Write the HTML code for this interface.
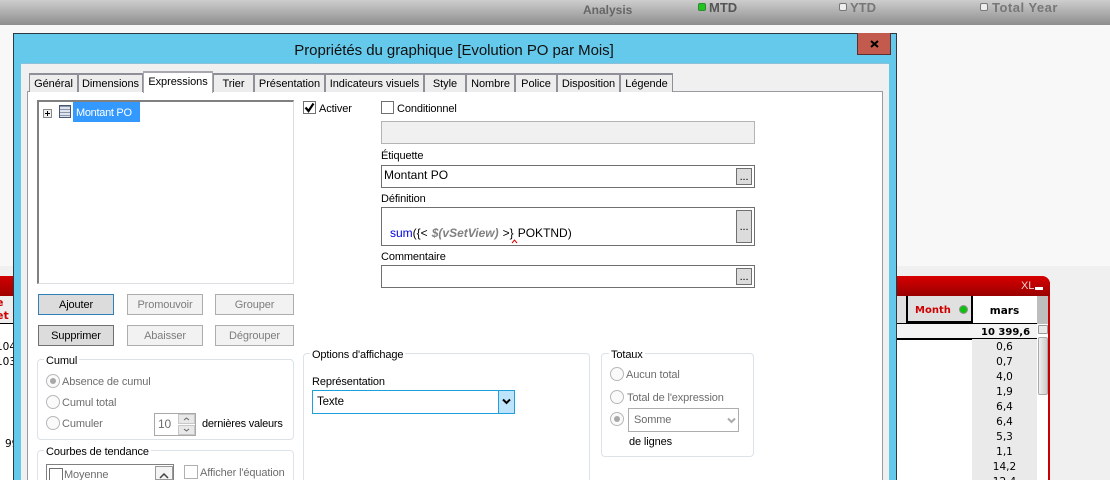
<!DOCTYPE html>
<html style="height:480px;overflow:hidden"><head><meta charset="utf-8"><style>
html,body{margin:0;padding:0}
body{width:1110px;height:480px;overflow:hidden;position:relative;background:#f8f8f8;font:11px "Liberation Sans",sans-serif;color:#000;letter-spacing:-.12px}
.a,.t,.b,.tab,.g,.r,.c{position:absolute;box-sizing:border-box}
.t{white-space:nowrap;line-height:16px}
.dis{color:#6d6d6d}
.tab{top:73px;height:19px;background:#ededed;border:2px solid #8f8f97;border-bottom:0;border-left-width:1px;border-right-width:1px;text-align:center;line-height:19px;white-space:nowrap;letter-spacing:-.05px}
.b{text-align:center;line-height:20px;height:21px;width:76px;border:1px solid #adadad;background:#f2f2f2;color:#7d7d7d}
.g{border:1px solid #dce3e8;border-radius:4px}
.l{position:absolute;background:#fff;padding:0 2px;line-height:16px;white-space:nowrap}
.r{width:14px;height:14px;border-radius:50%;border:1px solid #b8b8b8;background:#fafafa}
.r.on:after{content:"";position:absolute;left:3px;top:3px;width:6px;height:6px;border-radius:50%;background:#a8a8a8}
.c{width:14px;height:14px;border:1px solid #707070;background:#fff}
.f{position:absolute;box-sizing:border-box;border:1px solid #707070;background:#fff;font-size:12px;letter-spacing:0}
.d{position:absolute;box-sizing:border-box;width:16px;border:1px solid #707070;background:#dcdcdc;text-align:center;font-size:11px;line-height:17px}
.v{position:absolute;left:972px;width:65px;text-align:center;font:10.5px "DejaVu Sans",sans-serif;line-height:17px;background:#eaeaea;letter-spacing:0}
.h{font:13px/14px "Liberation Sans",sans-serif;font-weight:bold;letter-spacing:0}
[style*="DejaVu"]{letter-spacing:0}
</style></head><body>
<div class="a" style="left:0;top:266px;width:1110px;height:214px;background:#f0f0f0"></div>
<div class="a" style="left:0;top:0;width:1110px;height:25px;background:linear-gradient(#cdcdcd,#8e8e8e)"></div>
<div class="t" style="left:583px;top:3px;font-size:12px;line-height:14px;font-weight:bold;color:#666;letter-spacing:0">Analysis</div>
<div class="a" style="left:698px;top:3px;width:8px;height:8px;background:#22c422;border:1px solid #2f8a2f;border-radius:2px"></div>
<div class="t h" style="left:709px;top:1px;color:#555">MTD</div>
<div class="a" style="left:839px;top:3px;width:8px;height:8px;background:#eee;border:1px solid #777;border-radius:2px"></div>
<div class="t h" style="left:850px;top:1px;color:#777">YTD</div>
<div class="a" style="left:980px;top:3px;width:8px;height:8px;background:#eee;border:1px solid #777;border-radius:2px"></div>
<div class="t h" style="left:992px;top:1px;color:#777;letter-spacing:.5px">Total Year</div>

<!-- background table -->
<div class="a" style="left:0;top:276px;width:14px;height:204px;background:#fff"></div>
<div class="a" style="left:0;top:276px;width:14px;height:20px;background:linear-gradient(#d00000,#a00000)"></div>
<div class="a" style="left:0;top:296px;width:14px;height:28px;background:#eee;border-bottom:1px solid #000"></div>
<div class="t" style="left:-4px;top:296px;font:bold 11px/13px 'DejaVu Sans',sans-serif;color:#d00000">e</div>
<div class="t" style="left:-4px;top:309px;font:bold 11px/13px 'DejaVu Sans',sans-serif;color:#d00000">et</div>
<div class="a" style="left:0;top:340px;width:13px;height:30px;overflow:hidden"><div class="t" style="left:-4px;top:0;font:10.5px/15px 'DejaVu Sans',sans-serif">104</div><div class="t" style="left:-4px;top:15px;font:10.5px/15px 'DejaVu Sans',sans-serif">103</div></div>
<div class="t" style="left:5px;top:437px;font:10.5px/15px 'DejaVu Sans',sans-serif;width:8px;overflow:hidden">99</div>

<div class="a" style="left:897px;top:276px;width:153px;height:204px;background:#fff;border-right:2px solid #c80000;border-radius:0 8px 0 0"></div>
<div class="a" style="left:897px;top:276px;width:153px;height:20px;background:linear-gradient(#d80000,#980000);border-radius:0 8px 0 0"></div>
<div class="t" style="left:1021px;top:279px;font-size:11px;line-height:14px;color:#f0d0d0">XL</div>
<div class="a" style="left:1035px;top:287px;width:8px;height:3px;background:#fff"></div>
<div class="a" style="left:897px;top:296px;width:10px;height:27px;background:#e0e0e0"></div>
<div class="a" style="left:906px;top:296px;width:67px;height:27px;background:#e0e0e0;border:2px solid #000;border-top:0"></div>
<div class="t" style="left:915px;top:304px;font:bold 10px/14px 'DejaVu Sans',sans-serif;color:#d00000">Month</div>
<div class="a" style="left:960px;top:306px;width:7px;height:7px;border-radius:50%;background:#10c010;box-shadow:0 0 0 1px #909090"></div>
<div class="t" style="left:972px;top:304px;width:65px;text-align:center;font:bold 10.5px/14px 'DejaVu Sans',sans-serif">mars</div>
<div class="a" style="left:1037px;top:296px;width:11px;height:28px;background:#bdbdbd"></div>
<div class="a" style="left:897px;top:323px;width:140px;height:17px;background:#f4f4f4;border-top:1px solid #000;border-bottom:2px solid #000"></div>
<div class="t" style="left:981px;top:325px;font:bold 10px/15px 'DejaVu Sans',sans-serif">10 399,6</div>
<div class="a" style="left:1038px;top:325px;width:10px;height:9px;border:1px solid #999;background:#e8e8e8;border-radius:1px"></div>
<div class="a" style="left:1038px;top:337px;width:10px;height:58px;border:1px solid #aaa;background:linear-gradient(90deg,#f0f0f0,#ccc);border-radius:2px"></div>
<div class="v" style="top:339px;height:15px">0,6</div>
<div class="v" style="top:354px;height:15px">0,7</div>
<div class="v" style="top:369px;height:15px">4,0</div>
<div class="v" style="top:384px;height:15px">1,9</div>
<div class="v" style="top:399px;height:15px">6,4</div>
<div class="v" style="top:414px;height:15px">6,4</div>
<div class="v" style="top:429px;height:15px">5,3</div>
<div class="v" style="top:444px;height:15px">1,1</div>
<div class="v" style="top:459px;height:15px">14,2</div>
<div class="v" style="top:474px;height:6px;overflow:hidden">12,4</div>

<!-- dialog -->
<div class="a" style="left:13px;top:33px;width:884px;height:447px;background:#65c9ec;border:1px solid #2b3a42;border-bottom:0"></div>
<div class="t" style="left:14px;top:42px;width:880px;text-align:center;font-size:15px;line-height:17px;letter-spacing:-.05px;color:#111">Propriétés du graphique [Evolution PO par Mois]</div>
<div class="a" style="left:857px;top:33px;width:34px;height:22px;background:#c25a4e;border:1px solid #5a3030;border-top:0"></div>
<svg class="a" style="left:870px;top:40px" width="9" height="8"><path d="M1 1L8 7M8 1L1 7" stroke="#000" stroke-width="2" fill="none"/></svg>
<div class="a" style="left:21px;top:63px;width:868px;height:417px;background:#f0f0f0;border-top:1px solid #8cc0d8"></div>
<div class="a" style="left:27px;top:91px;width:856px;height:389px;background:#fff;border:1px solid #9a9a9f;border-bottom:0"></div>

<div class="tab" style="left:29px;width:49px">Général</div>
<div class="tab" style="left:78px;width:65px">Dimensions</div>
<div class="tab" style="left:213px;width:41px">Trier</div>
<div class="tab" style="left:254px;width:71px">Présentation</div>
<div class="tab" style="left:325px;width:99px">Indicateurs visuels</div>
<div class="tab" style="left:424px;width:42px">Style</div>
<div class="tab" style="left:466px;width:49px">Nombre</div>
<div class="tab" style="left:515px;width:42px">Police</div>
<div class="tab" style="left:557px;width:63px">Disposition</div>
<div class="tab" style="left:620px;width:53px">Légende</div>
<div class="tab" style="left:143px;top:71px;width:70px;height:22px;background:#fff;border-color:#a8a8ae;line-height:19px">Expressions</div>

<!-- tree -->
<div class="a" style="left:37px;top:100px;width:257px;height:184px;background:#fff;border:1px solid #dcdfe2;border-top:2px solid #808080;border-left:2px solid #808080"></div>
<div class="a" style="left:43px;top:109px;width:9px;height:9px;background:#f0f0f0;border:1px solid #8a8a8a"></div>
<div class="a" style="left:45px;top:113px;width:5px;height:1px;background:#000"></div>
<div class="a" style="left:47px;top:111px;width:1px;height:5px;background:#000"></div>
<div class="a" style="left:59px;top:105px;width:12px;height:13px;background:repeating-linear-gradient(#8a96b0 0 1px,#dfe3ec 1px 3px);border:1px solid #4a5570"></div>
<div class="a" style="left:73px;top:102px;width:67px;height:20px;background:#3399ff;color:#fff;padding-left:3px;line-height:22px;letter-spacing:-.3px;white-space:nowrap">Montant PO</div>

<!-- buttons -->
<div class="b" style="left:38px;top:294px;background:#dcdcdc;border-color:#2f7fb8;color:#000">Ajouter</div>
<div class="b" style="left:127px;top:294px">Promouvoir</div>
<div class="b" style="left:215px;top:294px;width:79px">Grouper</div>
<div class="b" style="left:38px;top:325px;background:#dcdcdc;border-color:#707070;color:#000">Supprimer</div>
<div class="b" style="left:127px;top:325px">Abaisser</div>
<div class="b" style="left:215px;top:325px;width:79px">Dégrouper</div>

<!-- cumul -->
<div class="g" style="left:37px;top:359px;width:257px;height:81px"></div>
<div class="l" style="left:44px;top:353px">Cumul</div>
<div class="r on" style="left:46px;top:374px"></div><div class="t dis" style="left:62px;top:374px">Absence de cumul</div>
<div class="r" style="left:46px;top:395px"></div><div class="t dis" style="left:62px;top:395px">Cumul total</div>
<div class="r" style="left:46px;top:416px"></div><div class="t dis" style="left:62px;top:416px">Cumuler</div>
<div class="a" style="left:154px;top:413px;width:42px;height:23px;border:1px solid #a8a8a8;background:#fff;padding-left:3px;line-height:20px;font-size:12px;color:#6d6d6d">10</div>
<div class="a" style="left:178px;top:414px;width:17px;height:10px;background:#e8e8e8;border:1px solid #c8c8c8"></div>
<svg class="a" style="left:183px;top:417px" width="7" height="4"><path d="M1 3L3.5 1L6 3" fill="none" stroke="#666"/></svg>
<div class="a" style="left:178px;top:425px;width:17px;height:10px;background:#e8e8e8;border:1px solid #c8c8c8"></div>
<svg class="a" style="left:183px;top:428px" width="7" height="4"><path d="M1 1L3.5 3L6 1" fill="none" stroke="#666"/></svg>
<div class="t" style="left:202px;top:416px;letter-spacing:-.22px">dernières valeurs</div>

<!-- courbes -->
<div class="g" style="left:37px;top:450px;width:257px;height:40px"></div>
<div class="l" style="left:44px;top:444px">Courbes de tendance</div>
<div class="a" style="left:46px;top:464px;width:128px;height:20px;border:1px solid #808080;background:#fff"></div>
<div class="c" style="left:49px;top:468px"></div><div class="t dis" style="left:64px;top:467px">Moyenne</div>
<div class="a" style="left:155px;top:466px;width:18px;height:14px;border:1px solid #999;background:#f4f4f4"></div>
<svg class="a" style="left:159px;top:473px" width="10" height="6"><path d="M1 5L5 1L9 5" fill="none" stroke="#444" stroke-width="1.5"/></svg>
<div class="c" style="left:184px;top:465px;border-color:#b0b0b0"></div><div class="t dis" style="left:200px;top:465px">Afficher l'équation</div>

<!-- right top -->
<div class="c" style="left:303px;top:101px;width:13px;height:13px"></div>
<svg class="a" style="left:304px;top:102px" width="11" height="11"><path d="M1.5 5.5L4.5 9L9.5 1.5" fill="none" stroke="#000" stroke-width="2.2"/></svg>
<div class="t" style="left:319px;top:101px">Activer</div>
<div class="c" style="left:381px;top:101px;width:13px;height:13px"></div>
<div class="t" style="left:397px;top:101px">Conditionnel</div>
<div class="a" style="left:381px;top:121px;width:374px;height:23px;background:#f0f0f0;border:1px solid #b4b4b4"></div>
<div class="t" style="left:381px;top:148px">Étiquette</div>
<div class="f" style="left:381px;top:165px;width:374px;height:23px;padding-left:2px;line-height:18px">Montant PO</div>
<div class="d" style="left:736px;top:168px;height:17px">...</div>
<div class="t" style="left:381px;top:191px">Définition</div>
<div class="f" style="left:381px;top:207px;width:374px;height:39px"></div>
<div class="t" style="left:390px;top:226px;font-size:12px;line-height:14px;letter-spacing:0;word-spacing:.7px"><span style="color:#0000e0">sum</span>({&lt; <b style="color:#808080;font-style:italic">$(vSetView)</b> &gt;} POKTND)</div>
<svg class="a" style="left:511px;top:239px" width="8" height="5"><path d="M1 4L3.5 1L6 4" fill="none" stroke="#e00000"/></svg>
<div class="d" style="left:736px;top:210px;height:33px;line-height:33px">...</div>
<div class="t" style="left:381px;top:249px">Commentaire</div>
<div class="f" style="left:381px;top:265px;width:374px;height:23px"></div>
<div class="d" style="left:736px;top:268px;height:17px">...</div>

<!-- options -->
<div class="g" style="left:303px;top:353px;width:287px;height:140px"></div>
<div class="l" style="left:310px;top:347px">Options d'affichage</div>
<div class="t" style="left:312px;top:374px">Représentation</div>
<div class="a" style="left:312px;top:390px;width:203px;height:24px;background:#fff;border:1px solid #1e9fde;padding-left:4px;line-height:22px;font-size:11.5px">Texte</div>
<div class="a" style="left:498px;top:390px;width:17px;height:24px;background:#bde4fb;border:1px solid #1e9fde"></div>
<svg class="a" style="left:502px;top:398px" width="9" height="7"><path d="M1 1.5L4.5 5L8 1.5" fill="none" stroke="#000" stroke-width="2"/></svg>

<!-- totaux -->
<div class="g" style="left:601px;top:353px;width:153px;height:104px"></div>
<div class="l" style="left:609px;top:347px">Totaux</div>
<div class="r" style="left:610px;top:367px"></div><div class="t dis" style="left:626px;top:367px">Aucun total</div>
<div class="r" style="left:610px;top:390px"></div><div class="t dis" style="left:627px;top:390px">Total de l'expression</div>
<div class="r on" style="left:610px;top:412px"></div>
<div class="a" style="left:628px;top:408px;width:111px;height:24px;background:#fff;border:1px solid #adadad;padding-left:5px;line-height:22px;color:#6d6d6d">Somme</div>
<svg class="a" style="left:727px;top:417px" width="9" height="7"><path d="M1 1.5L4.5 5L8 1.5" fill="none" stroke="#aaa" stroke-width="2"/></svg>
<div class="t" style="left:629px;top:434px">de lignes</div>
</body></html>
